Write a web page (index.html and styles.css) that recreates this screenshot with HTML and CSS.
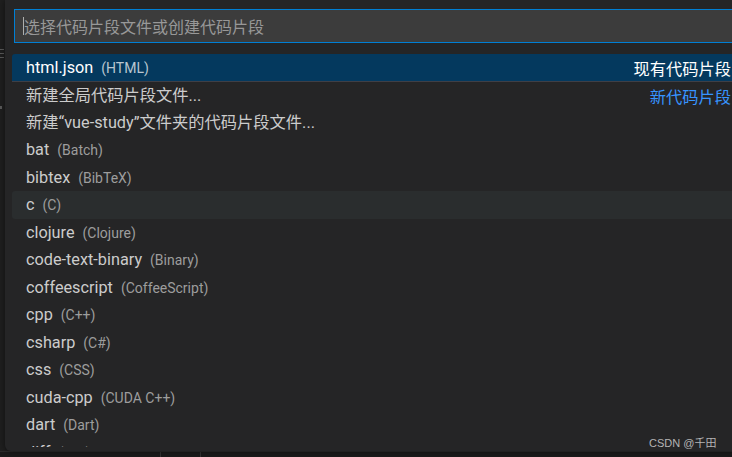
FILE: index.html
```html
<!DOCTYPE html>
<html lang="zh-CN">
<head>
<meta charset="utf-8">
<title>Snippets</title>
<link rel="stylesheet" href="styles.css">
</head>
<body>
<div class="editor">
  <div class="side-strip">
    <span class="mark m1"></span>
    <span class="mark m2"></span>
    <span class="mark m3"></span>
    <span class="mark m4"></span>
  </div>
  <div class="editor-main"></div>
</div>
<div class="bottom-bar">
  <span class="sep s1"></span>
  <span class="sep s2"></span>
</div>

<div class="quick-pick">
  <div class="input-wrap">
    <div class="input">
      <span class="caret"></span>
      <span class="placeholder">选择代码片段文件或创建代码片段</span>
    </div>
  </div>
  <div class="list">
    <div class="row selected">
      <span class="label">html.json</span><span class="desc">(HTML)</span>
      <span class="group">现有代码片段</span>
    </div>
    <div class="row group-start">
      <span class="label">新建全局代码片段文件...</span>
      <span class="group blue">新代码片段</span>
    </div>
    <div class="row"><span class="label">新建“vue-study”文件夹的代码片段文件...</span></div>
    <div class="row"><span class="label">bat</span><span class="desc">(Batch)</span></div>
    <div class="row"><span class="label">bibtex</span><span class="desc">(BibTeX)</span></div>
    <div class="row hover"><span class="label">c</span><span class="desc">(C)</span></div>
    <div class="row"><span class="label">clojure</span><span class="desc">(Clojure)</span></div>
    <div class="row"><span class="label">code-text-binary</span><span class="desc">(Binary)</span></div>
    <div class="row"><span class="label">coffeescript</span><span class="desc">(CoffeeScript)</span></div>
    <div class="row"><span class="label">cpp</span><span class="desc">(C++)</span></div>
    <div class="row"><span class="label">csharp</span><span class="desc">(C#)</span></div>
    <div class="row"><span class="label">css</span><span class="desc">(CSS)</span></div>
    <div class="row"><span class="label">cuda-cpp</span><span class="desc">(CUDA C++)</span></div>
    <div class="row"><span class="label">dart</span><span class="desc">(Dart)</span></div>
    <div class="row"><span class="label">diff</span><span class="desc">(Diff)</span></div>
  </div>
</div>

<div class="watermark">CSDN @千田</div>
</body>
</html>
```

FILE: styles.css
```css
* { box-sizing: border-box; }

html, body {
  margin: 0;
  padding: 0;
  width: 732px;
  height: 457px;
  overflow: hidden;
  background: #1e1e1e;
  font-family: Roboto, "Noto Sans CJK SC", sans-serif;
}

body {
  display: flex;
  flex-direction: column;
  position: relative;
}

.editor {
  flex: 1;
  display: flex;
}

.side-strip {
  width: 5px;
  position: relative;
  background: #1f1f1f;
}

.mark {
  position: absolute;
  left: 0;
  width: 4px;
  height: 1px;
  background: #5a5a5a;
}
.m1 { top: 49px; }
.m2 { top: 53px; }
.m3 { top: 57px; }
.m4 { top: 106px; width: 2px; height: 3px; }

.editor-main { flex: 1; background: #1e1e1e; }

.bottom-bar {
  height: 6px;
  background: #1a1a1a;
  border-top: 1px solid #2b2b2b;
  position: relative;
}
.sep {
  position: absolute;
  top: 0;
  bottom: 0;
  width: 1px;
  background: #333333;
}
.s1 { left: 160px; }
.s2 { left: 200px; }

.quick-pick {
  position: absolute;
  left: 5px;
  top: 0;
  width: 760px;
  height: 451px;
  background: #252526;
  border-bottom-left-radius: 6px;
  box-shadow: 0 0 6px rgba(0,0,0,0.5);
  padding-top: 9px;
  display: flex;
  flex-direction: column;
  overflow: hidden;
}

.input-wrap {
  padding-left: 9px;
}

.input {
  height: 34px;
  background: #3c3c3c;
  border: 1px solid #007fd4;
  border-right: none;
  display: flex;
  align-items: center;
  padding-left: 8px;
  position: relative;
}

.caret {
  width: 1px;
  height: 18px;
  background: #aeafad;
}

.placeholder {
  color: #989898;
  font-size: 16px;
  line-height: 20px;
  font-family: "Noto Sans CJK SC", sans-serif;
}

.list {
  margin-top: 10.5px;
  padding-left: 7px;
  padding-right: 28px;
  height: 393.5px;
  flex: none;
  overflow: hidden;
}

.row {
  height: 27.5px;
  display: flex;
  align-items: center;
  padding-left: 14px;
  padding-right: 6px;
  padding-top: 1px;
  border-radius: 3px;
  color: #cccccc;
  font-size: 16.25px;
  white-space: nowrap;
}

.row .label { line-height: 20px; }

.row .desc {
  margin-left: 8px;
  color: #9d9d9d;
  font-size: 14px;
  line-height: 20px;
}

.row .group {
  margin-left: auto;
  font-family: "Noto Sans CJK SC", sans-serif;
  font-size: 16.25px;
  line-height: 20px;
  color: #ffffff;
}

.row .group.blue { color: #3794ff; }

.row.selected {
  background: #04395e;
  color: #ffffff;
  border-radius: 3px 3px 0 0;
}
.row.selected .desc { color: #b9c6d0; }

.row.group-start {
  border-top: 1px solid #3f3f46;
  border-radius: 0;
}

.row.hover { background: #2a2d2e; }

.watermark {
  position: absolute;
  left: 649px;
  top: 434px;
  font-family: "Liberation Sans", "Noto Sans CJK SC", sans-serif;
  font-size: 11px;
  color: #b4b4b4;
}
```
